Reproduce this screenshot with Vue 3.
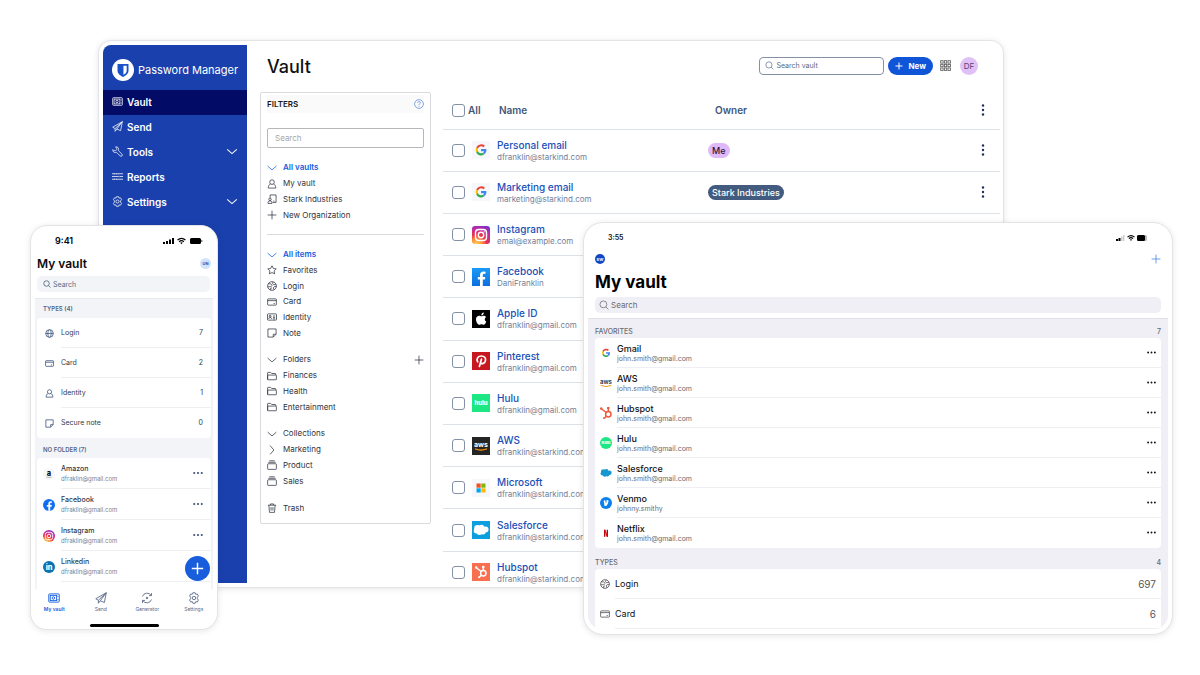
<script setup>
const navItems = [
  { label: 'Vault', icon: 'vault', active: true },
  { label: 'Send', icon: 'send' },
  { label: 'Tools', icon: 'wrench', expandable: true },
  { label: 'Reports', icon: 'sliders' },
  { label: 'Settings', icon: 'gear', expandable: true },
]

const filterGroups = [
  {
    size: 'four',
    divider: true,
    items: [
      { label: 'All vaults', icon: 'down', active: true },
      { label: 'My vault', icon: 'user' },
      { label: 'Stark Industries', icon: 'org' },
      { label: 'New Organization', icon: 'plus' },
    ],
  },
  {
    size: 'six',
    items: [
      { label: 'All items', icon: 'down', active: true },
      { label: 'Favorites', icon: 'star' },
      { label: 'Login', icon: 'globe' },
      { label: 'Card', icon: 'card' },
      { label: 'Identity', icon: 'id' },
      { label: 'Note', icon: 'note' },
    ],
  },
  {
    size: 'four',
    items: [
      { label: 'Folders', icon: 'down', addable: true },
      { label: 'Finances', icon: 'folder' },
      { label: 'Health', icon: 'folder' },
      { label: 'Entertainment', icon: 'folder' },
    ],
  },
  {
    size: 'four',
    items: [
      { label: 'Collections', icon: 'down' },
      { label: 'Marketing', icon: 'right' },
      { label: 'Product', icon: 'box' },
      { label: 'Sales', icon: 'box' },
    ],
  },
  { size: 'one', items: [{ label: 'Trash', icon: 'trash' }] },
]

const logins = [
  { name: 'Personal email', user: 'dfranklin@starkind.com', logo: 'google', bg: 'pale', owner: 'Me', pill: 'me' },
  { name: 'Marketing email', user: 'marketing@starkind.com', logo: 'google', bg: 'pale', owner: 'Stark Industries', pill: 'org' },
  { name: 'Instagram', user: 'emal@example.com', logo: 'instagram', bg: 'insta' },
  { name: 'Facebook', user: 'DaniFranklin', logo: 'facebook', bg: 'fb' },
  { name: 'Apple ID', user: 'dfranklin@gmail.com', logo: 'apple', bg: 'black' },
  { name: 'Pinterest', user: 'dfranklin@gmail.com', logo: 'pinterest', bg: 'red' },
  { name: 'Hulu', user: 'dfranklin@gmail.com', logo: 'hulu', bg: 'green' },
  { name: 'AWS', user: 'dfranklin@starkind.com', logo: 'aws', bg: 'dark' },
  { name: 'Microsoft', user: 'dfranklin@starkind.com', logo: 'microsoft', bg: 'pale' },
  { name: 'Salesforce', user: 'dfranklin@starkind.com', logo: 'cloud', bg: 'sky' },
  { name: 'Hubspot', user: 'dfranklin@starkind.com', logo: 'hubspot', bg: 'orange' },
]

const phoneTypes = [
  { label: 'Login', icon: 'world', count: 7 },
  { label: 'Card', icon: 'card', count: 2 },
  { label: 'Identity', icon: 'user', count: 1 },
  { label: 'Secure note', icon: 'note', count: 0 },
]
const phoneLogins = [
  { name: 'Amazon', logo: 'amazon', bg: 'pale' },
  { name: 'Facebook', logo: 'facebook', bg: 'fbround' },
  { name: 'Instagram', logo: 'instagram', bg: 'insta' },
  { name: 'Linkedin', logo: 'linkedin', bg: 'li' },
]
const tabs = [
  { label: 'My vault', icon: 'vault', active: true },
  { label: 'Send', icon: 'send' },
  { label: 'Generator', icon: 'generate' },
  { label: 'Settings', icon: 'gear' },
]

const favorites = [
  { name: 'Gmail', user: 'john.smith@gmail.com', logo: 'google', bg: 'bare', box: '1 1 16 16' },
  { name: 'AWS', user: 'john.smith@gmail.com', logo: 'awsdark', bg: 'bare', box: '0 0 18 18' },
  { name: 'Hubspot', user: 'john.smith@gmail.com', logo: 'hubspot', bg: 'bare hub', box: '3 3 12 12' },
  { name: 'Hulu', user: 'john.smith@gmail.com', logo: 'hulu', bg: 'green', box: '0 0 18 18' },
  { name: 'Salesforce', user: 'john.smith@gmail.com', logo: 'cloud', bg: 'bare sf', box: '1 1 16 16' },
  { name: 'Venmo', user: 'johnny.smithy', logo: 'venmo', bg: 'venmo', box: '0 0 18 18' },
  { name: 'Netflix', user: 'john.smith@gmail.com', logo: 'netflix', bg: 'bare', box: '0 0 18 18' },
]
const tabletTypes = [
  { label: 'Login', icon: 'globe', count: 697 },
  { label: 'Card', icon: 'card', count: 6 },
]
</script>

<template>
  <div class="stage">
    <svg class="sprite" aria-hidden="true">
      <defs>
        <g id="i-vault"><rect x="1" y="2.500" width="14" height="11" rx="1" /><rect x="3" y="4.500" width="8.500" height="7" /><circle cx="7.200" cy="8" r="1.700" /><path d="M13.300 5v1.500M13.300 9.500V11" /></g>
        <g id="i-send"><path d="M15 1 1 9l3.500 2L15 1 7 11.700l5.500 2.300zM4.500 11v4L7 11.700" /></g>
        <g id="i-wrench"><path d="M5.200 1.300 6.900 3v2.300L5.300 6.900H3L1.300 5.200C.7 7.800 2.700 10 5.300 9.600l1.300-.4 5.300 5.300a1.800 1.800 0 0 0 2.600-2.600L9.200 6.600l.4-1.300C10 2.700 7.800.7 5.200 1.300z" /></g>
        <g id="i-sliders"><path d="M0 4h4m2 0h10M0 8h9m2 0h5M0 12h4m2 0h10M4 3v2M6 3v2M10 7v2M4 11v2M6 11v2" /></g>
        <g id="i-gear"><path d="M6.500 1h3l.7 2 2.200-.3 1.500 2.600-1.400 1.700v2l1.400 1.700-1.500 2.600-2.200-.3-.7 2h-3l-.7-2-2.200.3-1.500-2.600L3.500 9V7L2.100 5.300l1.500-2.600 2.200.3z" /><circle cx="8" cy="8" r="2.300" /></g>
        <g id="i-down"><path d="M1 5l7 6 7-6" /></g>
        <g id="i-right"><path d="M5 1l6 7-6 7" /></g>
        <g id="i-plus"><path d="M8 1v14M1 8h14" /></g>
        <g id="i-user"><circle cx="8" cy="5" r="3.700" /><path d="M5.500 8C3 9 2 11.500 2 14.500h12C14 11.500 13 9 10.500 8" /></g>
        <g id="i-org"><path d="M5 6V1.500h9.500v12H9" /><circle cx="4.800" cy="8.500" r="2" /><path d="M1.500 15c0-3 1-4 3.300-4S8 12 8 15zM10 11.500h2" /></g>
        <g id="i-star"><path d="m8 1.200 2.100 4.300 4.700.7-3.400 3.300.8 4.700L8 12l-4.200 2.200.8-4.700L1.200 6.200l4.700-.7z" /></g>
        <g id="i-globe"><circle cx="8" cy="8" r="7" /><path d="M2 4.500h4L8 7 6 9.500 3.500 9 1.200 9.500M10 1.500 8.500 4 11 6l3.500-1M15 9h-3.500L10 11l1 3M6 14.500l-.5-2.500L8 11" /></g>
        <g id="i-world"><circle cx="8" cy="8" r="6.800" /><ellipse cx="8" cy="8" rx="3" ry="6.800" /><path d="M1.200 8h13.600" /></g>
        <g id="i-card"><rect x="1" y="3" width="14" height="10" rx="1" /><path d="M1 5.800h14M10.500 10.500h2" /></g>
        <g id="i-id"><rect x=".8" y="3" width="14.400" height="10" rx="1" /><circle cx="5" cy="6.800" r="1.500" /><path d="M2.500 11c.5-3 4.500-3 5 0M9.500 6.500h3.500M9.500 9h3.500M9.500 11h3.500" /></g>
        <g id="i-note"><path d="M1.500 1.500h13v8.500l-4.500 4.500H1.500zM14.500 10H10v4.500" /></g>
        <g id="i-folder"><path d="M1 13.500V3q0-.8.8-.8h4L7.500 4h5.700q.8 0 .8.800v1.700M1 13.500V7.300q0-.8.8-.8h12.400q.8 0 .8.800v6.200q0 .5-.8.500H1.800q-.8 0-.8-.5" /></g>
        <g id="i-box"><rect x="1" y="6" width="14" height="9" rx="1" /><path d="M2.200 3.700h11.600M3.500 1.300h9" /></g>
        <g id="i-trash"><path d="M1.500 3.500h13M5.500 3.500V1.500h5v2M3 3.500l1 11.500h8l1-11.500M6.500 6.500v5.500M9.500 6.500v5.500" /></g>
        <g id="i-generate"><path d="M2 6A6.500 6.500 0 0 1 13.600 4.500M14 1.500v3.300h-3.300M14 10A6.500 6.500 0 0 1 2.400 11.500M2 14.500v-3.300h3.300" /><circle cx="8" cy="8" r="1" fill="currentColor" /></g>
        <g id="i-search"><circle cx="7" cy="7" r="5.500" /><path d="m11 11 4 4" /></g>
        <g id="i-help"><circle cx="8" cy="8" r="7" /><path d="M5.800 6.200c0-3 4.600-2.700 4.400 0C10.100 7.800 8 7.700 8 9.700M8 11.200v1.300" /></g>
        <g id="i-dots"><g fill="currentColor" stroke="none"><circle cx="2" cy="8" r="1.700" /><circle cx="8" cy="8" r="1.700" /><circle cx="14" cy="8" r="1.700" /></g></g>
        <g id="i-kebab"><g fill="currentColor" stroke="none"><circle cx="8" cy="2" r="1.600" /><circle cx="8" cy="8" r="1.600" /><circle cx="8" cy="14" r="1.600" /></g></g>
        <g id="i-apps"><rect x="1" y="1" width="3.500" height="3.500" /><rect x="6.300" y="1" width="3.500" height="3.500" /><rect x="11.600" y="1" width="3.500" height="3.500" /><rect x="1" y="6.300" width="3.500" height="3.500" /><rect x="6.300" y="6.300" width="3.500" height="3.500" /><rect x="11.600" y="6.300" width="3.500" height="3.500" /><rect x="1" y="11.600" width="3.500" height="3.500" /><rect x="6.300" y="11.600" width="3.500" height="3.500" /><rect x="11.600" y="11.600" width="3.500" height="3.500" /></g>
        <g id="i-wifi"><g fill="none" stroke-width="2.200"><path d="M1 6.300q7-6.300 14 0M3.800 9.200q4.200-3.800 8.400 0" /></g><path d="m5.800 11.200q2.200-1.800 4.400 0L8 13.800z" fill="currentColor" stroke="none" /></g>

        <g id="l-google"><g transform="translate(1.200 1.100) scale(.87)"><path fill="#ea4335" d="M9 4.800c1.100 0 2 .4 2.800 1.100l1.700-1.700A6.300 6.300 0 0 0 3.500 6.200l2 1.500C6 6 7.400 4.800 9 4.800z" /><path fill="#fbbc05" d="M3.500 6.200a6.300 6.300 0 0 0 0 5.700l2-1.600a3.800 3.800 0 0 1 0-2.600z" /><path fill="#34a853" d="M3.500 11.900a6.200 6.200 0 0 0 9.700 1.900l-2-1.600c-2 1.300-4.900.5-5.700-1.900z" /><path fill="#4285f4" d="M15.100 7.900H9v2.500h3.500c-.2.800-.6 1.400-1.300 1.800l2 1.600c1.500-1.400 2.200-3.400 1.900-5.900z" /></g></g>
        <g id="l-instagram" fill="none" stroke="#fff" stroke-width="1.400"><rect x="3.500" y="3.500" width="11" height="11" rx="3.200" /><circle cx="9" cy="9" r="2.700" /><circle cx="12.200" cy="5.800" r=".4" fill="#fff" stroke-width=".5" /></g>
        <path id="l-facebook" fill="#fff" d="M8 18v-6.500H5.800V9H8V7.200c0-2.500 1.400-3.700 3.500-3.700l2 .2v2.100h-1.200c-1.200 0-1.500.7-1.500 1.500V9h2.500l-.4 2.500h-2.100V18z" />
        <g id="l-apple" fill="#fff"><path d="M12.800 9.500c0-1.400.7-2 1.300-2.500-1-1.400-2.700-1.400-3.500-1.100-1 .4-1.400.4-2.300 0C6.100 5.200 4 6.600 4 9.200c0 2.600 1.800 5.600 3.400 5.600.8 0 1.200-.5 2.100-.5s1.300.5 2.100.5c1.200 0 2.200-1.800 2.700-3.200-1-.4-1.500-1.200-1.500-2.100z" /><path d="M9.300 5.300c0-1.700 1-2.700 2.500-2.900.1 1.600-1 2.800-2.500 2.900z" /></g>
        <path id="l-pinterest" fill="none" stroke="#fff" stroke-width="1.700" stroke-linecap="round" d="M5.700 9.800C3.800 6.500 6.300 4 9.300 4c3.200 0 4.600 2 4.200 4.400-.5 3.200-3.800 4.100-5 2.100M9.500 7 7.400 14.500" />
        <g id="l-hulu"><text x="9" y="11" text-anchor="middle" class="glyph hulu">hulu</text></g>
        <g id="l-aws"><text x="9" y="10" text-anchor="middle" fill="#fff" class="glyph aws">aws</text><path d="M3 11.700q6 2.800 12 0" fill="none" stroke="#f90" stroke-width="1.200" /></g>
        <g id="l-awsdark"><text x="9" y="10" text-anchor="middle" fill="#3b4656" class="glyph awsbig">aws</text><path d="M1 12.500q8 4 16 0" fill="none" stroke="#f79a2b" stroke-width="1.500" /></g>
        <g id="l-microsoft"><path fill="#f25022" d="M4.500 4.500h4.200v4.200H4.500z" /><path fill="#7fba00" d="M9.300 4.500h4.200v4.200H9.300z" /><path fill="#00a4ef" d="M4.500 9.300h4.200v4.200H4.500z" /><path fill="#ffb900" d="M9.300 9.300h4.200v4.200H9.300z" /></g>
        <g id="l-cloud" fill="currentColor"><circle cx="5.500" cy="7.300" r="3.300" /><circle cx="9.500" cy="6.500" r="2.800" /><circle cx="13.500" cy="8.500" r="3" /><circle cx="4.300" cy="9.800" r="2.600" /><circle cx="7.500" cy="11" r="2.900" /><circle cx="11" cy="11" r="2.500" /></g>
        <g id="l-hubspot" fill="none" stroke="currentColor" stroke-width="1.500"><circle cx="11.300" cy="10.300" r="2.700" /><path d="M11.300 7.600V4.500M9.200 8.500 4 4.500M9.300 12.200 7 14.500" /><circle cx="11.300" cy="4" r=".6" fill="currentColor" /><circle cx="4.200" cy="4.600" r=".5" fill="currentColor" /><circle cx="7" cy="14.300" r=".3" fill="currentColor" /></g>
        <g id="l-amazon"><text x="9" y="12" text-anchor="middle" fill="#111" class="glyph big">a</text><path d="M5 13.500q4 2 8 0" stroke="#999" fill="none" /></g>
        <g id="l-linkedin"><text x="9" y="13" text-anchor="middle" fill="#fff" class="glyph big">in</text></g>
        <path id="l-venmo" fill="#fff" d="M5.500 5.300 8 4.900l.8 5c.8-1.300 1.500-3.300.8-4.900l2.700-.6c1.300 3-1 6.700-2.800 9.100H6.800z" />
        <g id="l-netflix"><path fill="#b1060f" d="M6 4h2v10.500H6zM10 4h2v10.500h-2z" /><path fill="#e50914" d="M6 4h2l4 10.500h-2z" /></g>
      </defs>
    </svg>

    <section class="desktop" aria-label="Web vault">
      <aside class="sidebar">
        <div class="brand">
          <svg class="shield" viewBox="0 0 24 24" aria-hidden="true"><circle cx="12" cy="12" r="12" fill="#fff" /><path d="M6 5.500h12v7c0 3.500-3 5.500-6 7-3-1.500-6-3.500-6-7z" fill="#1a50c8" /><path d="M12.500 7.300H16v5.500c0 2-1.600 3.500-3.500 4.500z" fill="#fff" /></svg>
          <span>Password Manager</span>
        </div>
        <nav>
          <a v-for="n in navItems" :key="n.label" href="#" class="nav-item" :class="{ active: n.active }">
            <svg class="ic" viewBox="0 0 16 16"><use :href="'#i-' + n.icon" /></svg>
            <span>{{ n.label }}</span>
            <svg v-if="n.expandable" class="ic chevron" viewBox="0 0 16 16"><use href="#i-down" /></svg>
          </a>
        </nav>
      </aside>

      <main class="main">
        <header class="topbar">
          <h1>Vault</h1>
          <label class="top-search">
            <svg class="ic" viewBox="0 0 16 16"><use href="#i-search" /></svg>
            <input type="search" placeholder="Search vault" aria-label="Search vault" />
          </label>
          <button class="new-btn" type="button"><svg class="ic" viewBox="0 0 16 16"><use href="#i-plus" /></svg>New</button>
          <button class="plain apps" type="button" aria-label="Apps"><svg class="ic" viewBox="0 0 16 16"><use href="#i-apps" /></svg></button>
          <button class="avatar" type="button">DF</button>
        </header>

        <div class="content">
          <section class="filters">
            <div class="filters-head">
              <h2>FILTERS</h2>
              <button class="plain help" type="button" aria-label="Help"><svg class="ic" viewBox="0 0 16 16"><use href="#i-help" /></svg></button>
            </div>
            <input class="filter-search" type="search" placeholder="Search" aria-label="Search filters" />
            <template v-for="(g, gi) in filterGroups" :key="gi">
              <ul class="group" :class="g.size">
                <li v-for="f in g.items" :key="f.label">
                  <a href="#" :class="{ active: f.active }">
                    <svg class="ic" viewBox="0 0 16 16"><use :href="'#i-' + f.icon" /></svg>{{ f.label }}
                  </a>
                  <button v-if="f.addable" class="plain" type="button" aria-label="Add folder"><svg class="ic" viewBox="0 0 16 16"><use href="#i-plus" /></svg></button>
                </li>
              </ul>
              <hr v-if="g.divider" />
            </template>
          </section>

          <table class="items">
            <colgroup><col class="c-check" /><col class="c-logo" /><col class="c-name" /><col /><col class="c-menu" /></colgroup>
            <thead>
              <tr>
                <th colspan="2"><label class="check-all"><input type="checkbox" />All</label></th>
                <th class="th-name">Name</th>
                <th class="th-owner">Owner</th>
                <th><button class="plain kebab" type="button" aria-label="Options"><svg class="ic" viewBox="0 0 16 16"><use href="#i-kebab" /></svg></button></th>
              </tr>
            </thead>
            <tbody>
              <tr v-for="l in logins" :key="l.name">
                <td class="td-check"><input type="checkbox" :aria-label="l.name" /></td>
                <td><svg class="logo" :class="l.bg" viewBox="0 0 18 18"><use :href="'#l-' + l.logo" /></svg></td>
                <td class="td-name"><a href="#">{{ l.name }}</a><span>{{ l.user }}</span></td>
                <td><span v-if="l.owner" class="pill" :class="l.pill">{{ l.owner }}</span></td>
                <td><button class="plain kebab" type="button" aria-label="Options"><svg class="ic" viewBox="0 0 16 16"><use href="#i-kebab" /></svg></button></td>
              </tr>
            </tbody>
          </table>
        </div>
      </main>
    </section>

    <section class="phone" aria-label="Phone vault">
      <div class="phone-status">
        <span>9:41</span>
        <svg class="status" viewBox="0 0 40 8"><path d="M0 5h2v2H0zM3 4h2v3H3zM6 2.500h2V7H6zM9 1h2v6H9z" /><svg x="14" y="-1" width="9" height="10" viewBox="0 0 16 16" stroke="#000"><use href="#i-wifi" /></svg><rect x="27" y="1" width="11" height="6" rx="1.500" /><path d="M38.500 3h.7v2h-.7z" /></svg>
      </div>
      <div class="phone-title"><h2>My vault</h2><span class="badge">UN</span></div>
      <label class="m-search">
        <svg class="ic" viewBox="0 0 16 16"><use href="#i-search" /></svg>
        <input type="search" placeholder="Search" aria-label="Search my vault" />
      </label>
      <div class="phone-body">
        <h3>TYPES (4)</h3>
        <ul class="m-card">
          <li v-for="t in phoneTypes" :key="t.label" class="type-row">
            <svg class="ic" viewBox="0 0 16 16"><use :href="'#i-' + t.icon" /></svg>
            <div class="cell"><span>{{ t.label }}</span><span>{{ t.count }}</span></div>
          </li>
        </ul>
        <h3>NO FOLDER (7)</h3>
        <ul class="m-card phone-logins">
          <li v-for="l in phoneLogins" :key="l.name" class="login-row">
            <svg class="logo round" :class="l.bg" viewBox="0 0 18 18"><use :href="'#l-' + l.logo" /></svg>
            <div class="cell">
              <div><strong>{{ l.name }}</strong><small>dfraklin@gmail.com</small></div>
              <button class="plain" type="button" aria-label="More"><svg class="ic" viewBox="0 0 16 16"><use href="#i-dots" /></svg></button>
            </div>
          </li>
        </ul>
      </div>
      <button class="fab" type="button" aria-label="Add item"><svg class="ic" viewBox="0 0 16 16"><use href="#i-plus" /></svg></button>
      <nav class="tabs">
        <a v-for="t in tabs" :key="t.label" href="#" :class="{ active: t.active }">
          <svg class="ic" viewBox="0 0 16 16"><use :href="'#i-' + t.icon" /></svg>{{ t.label }}
        </a>
      </nav>
      <div class="home-bar"></div>
    </section>

    <section class="tablet" aria-label="Tablet vault">
      <div class="tablet-status">
        <span>3:55</span>
        <svg class="status" viewBox="0 0 32 8"><path d="M0 5h2v2H0zM2.500 4h2v3h-2z" /><path d="M5 2.500h1.500V7H5zM7 1h1.500v6H7z" fill="#ccc" /><svg x="10.500" y="0" width="9" height="8" viewBox="0 0 16 16" stroke="#000"><use href="#i-wifi" /></svg><rect x="21" y="1" width="10" height="6" rx="1.500" fill="#bbb" /><rect x="21" y="1" width="8" height="6" rx="1.500" /></svg>
      </div>
      <div class="tablet-bar">
        <span class="badge">EW</span>
        <button class="plain" type="button" aria-label="Add item"><svg class="ic" viewBox="0 0 16 16"><use href="#i-plus" /></svg></button>
      </div>
      <h2>My vault</h2>
      <label class="m-search">
        <svg class="ic" viewBox="0 0 16 16"><use href="#i-search" /></svg>
        <input type="search" placeholder="Search" aria-label="Search tablet vault" />
      </label>
      <div class="tablet-body">
        <h3><span>FAVORITES</span><span>7</span></h3>
        <ul class="m-card">
          <li v-for="l in favorites" :key="l.name" class="login-row">
            <svg class="logo round" :class="l.bg" :viewBox="l.box"><use :href="'#l-' + l.logo" /></svg>
            <div class="cell">
              <div><strong>{{ l.name }}</strong><small>{{ l.user }}</small></div>
              <button class="plain" type="button" aria-label="More"><svg class="ic" viewBox="0 0 16 16"><use href="#i-dots" /></svg></button>
            </div>
          </li>
        </ul>
        <h3><span>TYPES</span><span>4</span></h3>
        <ul class="m-card types">
          <li v-for="t in tabletTypes" :key="t.label" class="type-row">
            <svg class="ic" viewBox="0 0 16 16"><use :href="'#i-' + t.icon" /></svg>
            <div class="cell"><span>{{ t.label }}</span><span class="count">{{ t.count }}</span></div>
          </li>
        </ul>
      </div>
    </section>
  </div>
</template>

<style>
html, body { margin: 0; background: #fff; }
</style>

<style scoped>
* { box-sizing: border-box; }
.stage {
  position: relative;
  min-height: 100vh;
  overflow: hidden;
  font-family: Inter, "Open Sans", sans-serif;
  color: #1f2430;
}
.sprite { position: absolute; width: 0; height: 0; }
h1, h2, h3, ul { margin: 0; padding: 0; }
ul { list-style: none; }
a { color: inherit; text-decoration: none; }
button, input { font-family: inherit; margin: 0; }
.ic { width: 10px; height: 10px; flex: none; fill: none; stroke: currentColor; stroke-width: 1.2; display: block; }
.plain { background: none; border: 0; padding: 0; color: inherit; display: block; }
.glyph { font-family: Inter, sans-serif; font-weight: 800; }
.hulu { font-size: 6px; fill: #fff; }
.aws { font-size: 7px; font-weight: 700; }
.awsbig { font-size: 9px; font-weight: 700; }
.big { font-size: 11px; }

.desktop, .phone, .tablet {
  position: absolute;
  background: #fff;
  border: 1px solid #e3e4e8;
  box-shadow: 0 1px 6px rgba(0, 0, 0, 0.1);
  overflow: hidden;
  display: flex;
}
.desktop { left: 98px; right: 196px; top: 40px; height: 548px; border-radius: 13px; padding: 4px 3px 4px 4px; }
.phone { left: 30px; top: 225px; width: 188px; height: 405px; border-radius: 17px; flex-direction: column; }
.tablet { left: 583px; right: 27px; top: 222px; height: 413px; border-radius: 20px; flex-direction: column; padding: 0 4px 5px; }

.sidebar { width: 144px; flex: none; background: #1a40ad; color: #fff; border-radius: 8px 0 0 0; overflow: hidden; }
.brand { display: flex; align-items: center; gap: 4px; height: 45px; padding: 5px 0 0 9px; font-size: 11px; white-space: nowrap; }
.shield { width: 22px; height: 22px; flex: none; }
.nav-item { display: flex; align-items: center; gap: 4px; height: 25px; padding: 0 9px 2px; font-size: 10px; font-weight: 600; }
.nav-item .ic { width: 11px; height: 11px; stroke-width: 1.1; }
.nav-item.active { background: #020c66; }
.nav-item .chevron { margin-left: auto; width: 12px; stroke-width: 1.5; }

.main { flex: 1; min-width: 0; padding-left: 13px; }
.topbar { display: flex; align-items: center; height: 47px; padding: 0 22px 6px 7px; }
.topbar h1 { font-size: 18px; line-height: 22px; padding-top: 2px; font-weight: 500; color: #111; margin-right: auto; }
.top-search { display: flex; align-items: center; gap: 2px; width: 125px; height: 18px; padding: 0 5px; border: 1px solid #8390a6; border-radius: 4px; color: #5a6a84; }
.top-search .ic { width: 9px; height: 9px; }
input[type="search"] { appearance: none; border: 0; background: none; outline: 0; padding: 0; min-width: 0; flex: 1; font-size: 7px; color: inherit; }
input::placeholder { color: inherit; opacity: 1; }
.new-btn { display: flex; align-items: center; gap: 5px; height: 18px; padding: 0 7px; margin-left: 4px; border: 0; border-radius: 9px; background: #1055d8; color: #fff; font-size: 8px; font-weight: 700; }
.new-btn .ic { width: 8px; height: 8px; stroke-width: 2; }
.apps { margin: 0 9px 0 7px; color: #555; }
.apps .ic { width: 11px; height: 11px; }
.avatar { width: 18px; height: 18px; padding: 0; border: 0; border-radius: 50%; background: #dfc1f7; color: #5a3f73; font-size: 8px; }

.content { display: flex; align-items: flex-start; gap: 12px; }
.filters { width: 171px; flex: none; border: 1px solid #d8dade; border-radius: 2px; padding: 2px 6px 7px; font-size: 8px; color: #2f3440; }
.filters-head { display: flex; align-items: center; justify-content: space-between; height: 18px; background: #fafafa; }
.filters-head h2 { font-size: 8px; font-weight: 600; color: #16181d; }
.help { color: #5c8be0; }
.filters .filter-search { display: block; width: 100%; height: 20px; margin: 15px 0 12px; padding: 0 7px; border: 1px solid #b5b7bb; border-radius: 2px; font-size: 8px; color: #a5a7ab; }
.group { display: grid; grid-auto-rows: 1fr; margin-bottom: 11px; }
.group.four { min-height: 63px; }
.group.six { min-height: 94px; }
.group.one { min-height: 16px; margin-bottom: 0; }
.group li { display: flex; align-items: center; justify-content: space-between; }
.group a { display: flex; align-items: center; gap: 6px; line-height: 15px; }
.group a.active { color: #175ddc; font-weight: 600; }
hr { border: 0; border-top: 1px solid #d8dade; margin: 0 0 12px; }

.items { flex: 1; min-width: 0; height: 502px; border-collapse: collapse; table-layout: fixed; font-size: 10px; color: #42577a; }
.c-check { width: 29px; }
.c-logo { width: 25px; }
.c-name { width: 211px; }
.c-menu { width: 26px; }
.items th, .items td { padding: 0; text-align: left; border-bottom: 1px solid #dde1e8; }
.items thead tr { height: 37px; }
.items th { font-weight: 600; }
.items .th-name { padding-left: 2px; }
.items .th-owner { padding-left: 7px; }
.check-all { display: flex; align-items: center; gap: 3px; padding-left: 9px; }
.td-check input { margin-left: 9px; }
input[type="checkbox"] { appearance: none; display: block; width: 13px; height: 13px; border: 1px solid #8390a6; border-radius: 3px; background: #fff; }
.logo { display: block; width: 18px; height: 18px; }
.td-name a { display: block; color: #1a4fb8; font-weight: 500; line-height: 13px; }
.td-name span { display: block; font-size: 8px; line-height: 10px; color: #74819a; white-space: nowrap; }
.pill { display: inline-block; height: 15px; line-height: 15px; padding: 0 4px; border-radius: 8px; font-size: 9px; font-weight: 500; vertical-align: middle; }
.pill.me { background: #dfb9f7; color: #2c1640; }
.pill.org { background: #425b7e; color: #fff; }
.kebab { color: #1c2f5c; padding-left: 3px; }
.kebab .ic { width: 12px; height: 12px; }

.pale { background: #f6f7fa; }
.insta { background: radial-gradient(circle at 25% 105%, #fd5 0, #fb923c 25%, #e8324c 45%, #c32aa3 68%, #5b35d8 100%); border-radius: 3px; }
.fb { background: linear-gradient(#1b9af7, #0b6fe0); }
.fbround { background: #0f6ff0; }
.black { background: #000; }
.red { background: #c8181f; }
.green { background: #1ce783; }
.dark { background: #252526; }
.sky { background: #0b9fe0; color: #fff; }
.orange { background: #f8704f; color: #fff; }
.hub { color: #f0583a; }
.sf { color: #1797cf; }
.li { background: #0a72b1; }
.venmo { background: #0a80ee; }

.m-search { display: flex; align-items: center; gap: 2px; height: 16px; flex: none; padding: 0 6px; border-radius: 5px; }
.m-card { background: #fff; border-radius: 4px; }
.m-card li { display: flex; align-items: center; height: 30px; }
.cell { flex: 1; align-self: stretch; display: flex; align-items: center; justify-content: space-between; border-bottom: 1px solid #eeeff2; }
.m-card li:last-child .cell { border-bottom-color: transparent; }
.cell strong, .cell small { display: block; }
.round { width: 12px; height: 12px; border-radius: 50%; }
.bare { border-radius: 0; }
.badge { display: flex; align-items: center; justify-content: center; border-radius: 50%; font-weight: 700; font-size: 4px; }

.phone { padding: 0 4px; }
.phone-status { display: flex; align-items: center; justify-content: space-between; height: 29px; padding: 0 10px 0 20px; font-size: 9px; font-weight: 600; color: #000; flex: none; }
.phone .status { width: 40px; height: 8px; }
.phone-title { display: flex; align-items: center; justify-content: space-between; height: 16px; padding: 0 2px; flex: none; }
.phone-title h2 { font-size: 12px; font-weight: 600; color: #0b0c10; }
.phone .badge { width: 11px; height: 11px; background: #d3e2fb; color: #1a4fb8; }
.phone .m-search { margin: 5px 3px 6px 2px; background: #f3f4f7; color: #5b6b86; }
.phone .m-search .ic { width: 8px; height: 8px; stroke-width: 1.8; }
.phone-body { flex: 1; min-height: 0; overflow: hidden; background: #f2f4f8; border-top: 1px solid #e5e8ee; padding: 0 2px; }
.phone-body h3 { height: 19px; padding: 0 6px; line-height: 20px; font-size: 6px; font-weight: 600; color: #52668a; }
.phone-body .m-card + h3 { height: 20px; line-height: 24px; }
.phone .m-card { font-size: 7px; }
.phone .phone-logins { padding-bottom: 10px; }
.phone .m-card .login-row { height: 31px; }
.phone .m-card .login-row:last-child .cell { border-bottom-color: #eeeff2; }
.phone .type-row .ic { width: 9px; height: 9px; margin: 0 7px 0 8px; color: #4a5f85; stroke-width: 1.5; }
.phone .cell { padding-right: 8px; color: #333a47; }
.phone .round { margin: 0 6px; border-radius: 50%; }
.phone strong { font-weight: 500; line-height: 10px; }
.phone small { font-size: 6px; line-height: 9px; color: #76839b; }
.phone .login-row .plain { color: #3b5075; }
.tabs { display: grid; grid-template-columns: repeat(4, 1fr); height: 26px; flex: none; margin: 0 -4px; padding-top: 3px; background: #fff; }
.tabs a { display: flex; flex-direction: column; align-items: center; gap: 2px; font-size: 5px; line-height: 7px; color: #5a6a88; }
.tabs .ic { width: 12px; height: 12px; }
.tabs .active { color: #175ddc; font-weight: 600; }
.home-bar { width: 69px; height: 3px; margin: 9px auto 2px; border-radius: 2px; background: #000; flex: none; }
.fab { position: absolute; right: 7px; bottom: 48px; width: 25px; height: 25px; padding: 0; display: grid; place-items: center; border: 0; border-radius: 50%; background: #175ddc; color: #fff; }
.fab .ic { width: 13px; height: 13px; stroke-width: 1.8; }

.tablet-status { display: flex; align-items: center; justify-content: space-between; height: 29px; padding: 0 20px; font-size: 7px; font-weight: 600; color: #111; flex: none; }
.tablet .status { width: 32px; height: 8px; }
.tablet-bar { display: flex; align-items: center; justify-content: space-between; height: 14px; padding: 0 7px; flex: none; color: #3f7fe0; }
.tablet .badge { width: 10px; height: 10px; background: #1247c4; color: #fff; }
.tablet h2 { padding: 0 7px; height: 31px; line-height: 32px; font-size: 17px; font-weight: 700; color: #000; flex: none; }
.tablet .m-search { margin: 0 7px 5px; padding: 0 4px; background: #f0eff5; color: #6b6b73; }
.tablet .m-search input { font-size: 8px; }
.tablet-body { flex: 1; min-height: 0; overflow: hidden; background: #f0eff5; border-top: 1px solid #e2e1e8; padding: 0 7px; border-radius: 0 0 14px 14px; }
.tablet-body h3 { display: flex; align-items: center; justify-content: space-between; height: 19px; padding-top: 5px; font-size: 7px; font-weight: 500; color: #6b6b73; }
.tablet-body .m-card + h3 { height: 21px; padding-top: 7px; }
.tablet .m-card { font-size: 9px; }
.tablet .round { margin: 0 5px; }
.tablet strong { font-weight: 500; line-height: 11px; color: #111; }
.tablet small { font-size: 7px; line-height: 9px; color: #6b6b73; }
.tablet .cell { padding-right: 5px; color: #111; }
.tablet .login-row .ic { width: 9px; height: 9px; stroke-width: 2; }
.tablet .type-row .ic { margin: 0 5px; color: #44464d; }
.tablet .types .cell, .tablet .types li:last-child .cell { border-bottom-color: #eeeff2; }
.tablet .count { font-size: 10px; color: #55565c; }
</style>
